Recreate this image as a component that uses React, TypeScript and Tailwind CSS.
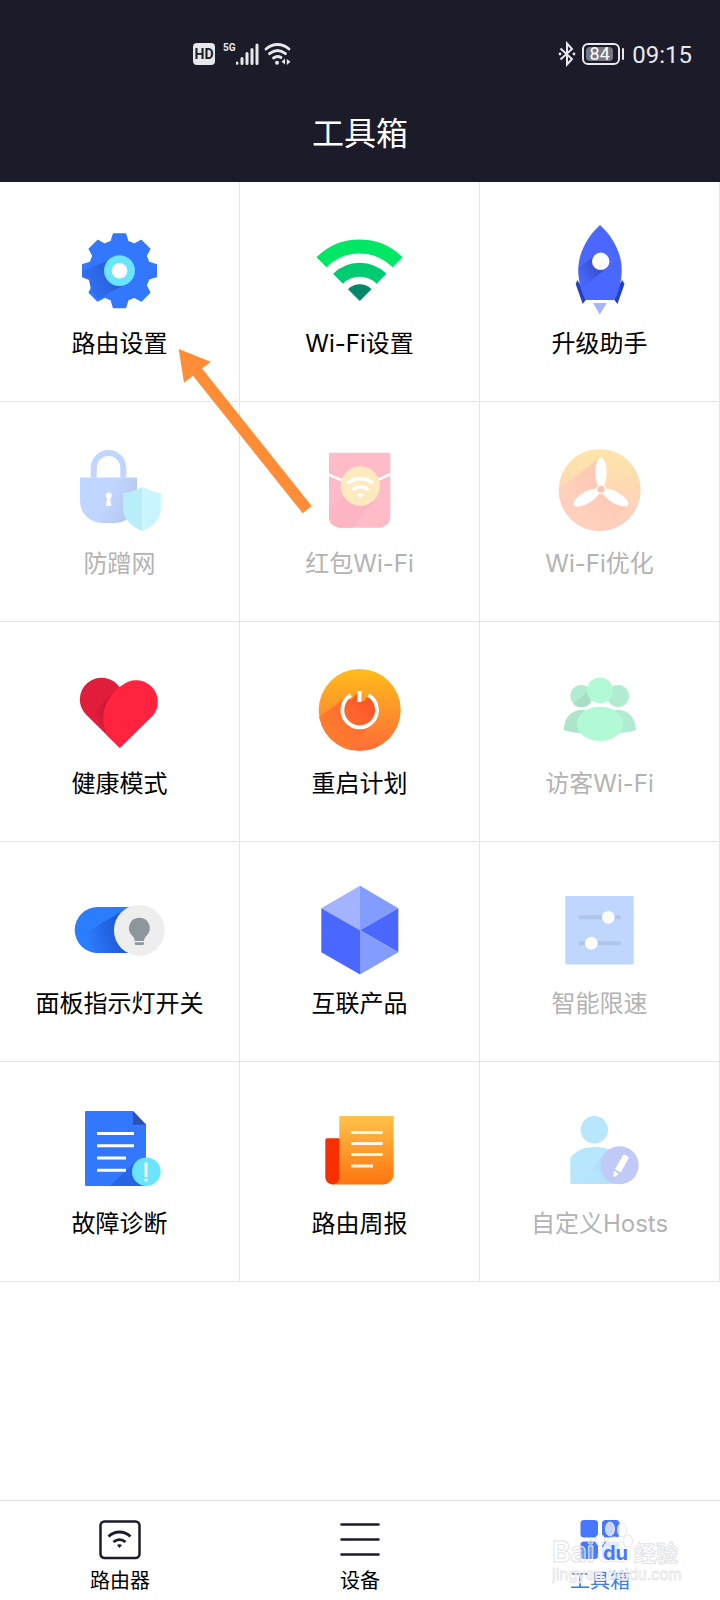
import type { ReactNode } from 'react'

type Tool = {
  id: string
  label: string
  icon: ReactNode
  disabled?: boolean
}

const GEAR_ANGLES = [0, 45, 90, 135, 180, 225, 270, 315]

// ── Tool icons ─────────────────────────────────────────
const GearIcon = () => (
  <>
    <defs>
      <linearGradient id="gear-shade" x1="38" y1="46" x2="12" y2="60" gradientUnits="userSpaceOnUse">
        <stop offset="0" stopColor="#2760d8" />
        <stop offset="1" stopColor="#3272f6" />
      </linearGradient>
    </defs>
    <g transform="translate(47.5 46.7)">
      <circle r="31" fill="#3377ff" />
      {GEAR_ANGLES.map((a) => (
        <path
          key={a}
          d="M-9 -27L-6 -36.8H6L9 -27Z"
          fill="#3377ff"
          stroke="#3377ff"
          strokeWidth="1.4"
          strokeLinejoin="round"
          transform={`rotate(${a})`}
        />
      ))}
    </g>
    <path d="M35 37L10 47V53L17 56L19 66L26 75L52 61Z" fill="url(#gear-shade)" />
    <circle cx="47.5" cy="46.7" r="15.4" fill="#6ae4ff" />
    <circle cx="47.5" cy="46.7" r="7.8" fill="#fff" />
  </>
)

const WifiIcon = () => (
  <>
    <path d="M9.5 38.2A54 54 0 0 1 85.5 38.2" fill="none" stroke="#00e765" strokeWidth="14" />
    <path d="M26 54.7A31 31 0 0 1 69.5 54.7" fill="none" stroke="#00cb70" strokeWidth="14" />
    <path d="M47.8 77L36 65.2A16.5 16.5 0 0 1 59.5 65.2Z" fill="#00876c" />
  </>
)

const RocketIcon = () => (
  <>
    <defs>
      <linearGradient id="rocket-shade" x1="46" y1="42" x2="30" y2="54" gradientUnits="userSpaceOnUse">
        <stop offset="0" stopColor="#3750cb" />
        <stop offset="1" stopColor="#4865fb" />
      </linearGradient>
    </defs>
    <path d="M25.3 56L23.7 60L30.7 80L36 73Z" fill="#2443b8" />
    <path d="M70.2 56L72.5 60L65.5 80L60 73Z" fill="#2443b8" />
    <path
      d="M48 1C60 12 69.7 28 69.7 46C69.7 58 66.5 68 62.5 76H33.5C29.5 68 26.3 58 26.3 46C26.3 28 36 12 48 1Z"
      fill="#4a67ff"
    />
    <path d="M41 33L26.5 44C26.5 52 28 58 30 63L34 61L56 43Z" fill="url(#rocket-shade)" />
    <circle cx="48.7" cy="37.3" r="8.7" fill="#fff" />
    <path d="M41 79H54.7L47.8 90.5Z" fill="#a5b3fe" />
  </>
)

const LockIcon = () => (
  <>
    <defs>
      <linearGradient id="lock-body" x1="20" y1="46" x2="60" y2="66" gradientUnits="userSpaceOnUse">
        <stop offset="0.4" stopColor="#c0d5ff" />
        <stop offset="1" stopColor="#b7c7ee" />
      </linearGradient>
    </defs>
    <path d="M21.7 33.5V23.8a14.8 14.8 0 0 1 29.6 0V33.5" fill="none" stroke="#c0d5ff" strokeWidth="6" />
    <path d="M8 33.5H65V57A22 22 0 0 1 43 79H30A22 22 0 0 1 8 57Z" fill="url(#lock-body)" />
    <circle cx="36.7" cy="51.5" r="3" fill="#fff" />
    <path d="M35.3 52H38L39.3 62H34Z" fill="#fff" />
    <path d="M70.3 42.7C65 46 58 48 51 49.3V66C52 76 61 83 70.3 87Z" fill="#b8eefa" />
    <path d="M70.3 42.7C76 46 82 48 88.8 49.3V66C88 76 80 83 70.3 87Z" fill="#c8f5ff" />
  </>
)

const PacketIcon = () => (
  <>
    <path d="M17 8.7H78.3V73A11 11 0 0 1 67.3 83.7H28A11 11 0 0 1 17 73Z" fill="#ffbbc7" />
    <path d="M31 52L17 65V73A11 11 0 0 0 28 83.7H40L64 54Z" fill="#fdb5c3" />
    <path d="M17 30.8L48 44L78.3 30.3" fill="none" stroke="#fff" strokeWidth="2.6" />
    <circle cx="48.3" cy="42" r="19.7" fill="#ffe9bf" />
    <g fill="none" stroke="#fff" strokeWidth="3.6">
      <path d="M35.5 39.5C43 33 54 33 61.2 39.5" />
      <path d="M40.5 45.8C45 42 52 42 56.2 45.8" />
    </g>
    <path d="M48.3 54.5L44.6 50.5C47 48.5 50 48.5 52 50.5Z" fill="#fff" />
  </>
)

const FanIcon = () => (
  <>
    <defs>
      <linearGradient id="fan-bg" x1="0" y1="5" x2="0" y2="87" gradientUnits="userSpaceOnUse">
        <stop offset="0" stopColor="#fee5a9" />
        <stop offset="1" stopColor="#ffccc0" />
      </linearGradient>
      <linearGradient id="fan-shade" x1="48" y1="36" x2="24" y2="60" gradientUnits="userSpaceOnUse">
        <stop offset="0" stopColor="#ffc9b4" />
        <stop offset="1" stopColor="#ffd0bc" />
      </linearGradient>
      <clipPath id="fan-clip">
        <circle cx="47.7" cy="46" r="41" />
      </clipPath>
    </defs>
    <circle cx="47.7" cy="46" r="41" fill="url(#fan-bg)" />
    <g clipPath="url(#fan-clip)">
      <path d="M47 15L0 50V90H50L76 60L48 46Z" fill="url(#fan-shade)" />
    </g>
    <g transform="translate(49 45.3)" fill="#fff">
      <ellipse cy="-16.5" rx="5.7" ry="14.8" />
      <ellipse cy="-16.5" rx="5.7" ry="14.8" transform="rotate(120)" />
      <ellipse cy="-16.5" rx="5.7" ry="14.8" transform="rotate(240)" />
      <circle r="5" />
    </g>
    <circle cx="49" cy="45.3" r="3.5" fill="#fcc3b3" />
  </>
)

const HeartIcon = () => (
  <>
    <defs>
      <linearGradient id="heart-shade" x1="40" y1="40" x2="22" y2="46" gradientUnits="userSpaceOnUse">
        <stop offset="0" stopColor="#bd1831" />
        <stop offset="1" stopColor="#de1c39" />
      </linearGradient>
    </defs>
    <path d="M48 84L15 51.5A21.7 21.7 0 1 1 48 24Z" fill="#e01d3a" />
    <path d="M42 28L20 50L36 72Z" fill="url(#heart-shade)" />
    <path
      d="M48 84L81 51.5A21.7 21.7 0 0 0 50.5 21C38.500 28.500 31.300 41 31.300 54C31.300 60 32.900 66 35.700 72Z"
      fill="#ff2340"
    />
  </>
)

const PowerIcon = () => (
  <>
    <defs>
      <linearGradient id="power-bg" x1="0" y1="5" x2="0" y2="87" gradientUnits="userSpaceOnUse">
        <stop offset="0" stopColor="#ffbd1b" />
        <stop offset="1" stopColor="#ff6c38" />
      </linearGradient>
      <linearGradient id="power-shade" x1="44" y1="40" x2="18" y2="66" gradientUnits="userSpaceOnUse">
        <stop offset="0" stopColor="#ff6a2b" />
        <stop offset="1" stopColor="#ff7b32" />
      </linearGradient>
      <linearGradient id="power-core" x1="60" y1="36" x2="36" y2="58" gradientUnits="userSpaceOnUse">
        <stop offset="0" stopColor="#ff5426" />
        <stop offset="1" stopColor="#ff6a31" />
      </linearGradient>
      <clipPath id="power-clip">
        <circle cx="47.7" cy="46" r="41" />
      </clipPath>
    </defs>
    <circle cx="47.7" cy="46" r="41" fill="url(#power-bg)" />
    <g clipPath="url(#power-clip)">
      <path d="M35 33L0 58V92H32L60 60Z" fill="url(#power-shade)" />
    </g>
    <path
      d="M45.500 29L39 36L36 34A17 17 0 1 0 57 31.500L52 37L49.500 37Z"
      fill="url(#power-core)"
    />
    <path d="M38.9 31.2A17.3 17.3 0 1 0 56.5 31.2" fill="none" stroke="#fff" strokeWidth="3.8" />
    <path d="M47.4 27V38" stroke="#fff" strokeWidth="4.2" />
  </>
)

const GuestsIcon = () => (
  <>
    <circle cx="29.3" cy="32" r="11" fill="#b1ebd1" />
    <path d="M38 25.5L21.5 39.8A11 11 0 0 0 39 38Z" fill="#a8dec5" />
    <circle cx="66" cy="32" r="11" fill="#b1ebd1" />
    <path d="M11.7 66C12 54 19 46 30 46C37 46 42 49 45 53L30 69C23 69 17 68 11.7 66Z" fill="#ade4cb" />
    <path d="M84 66C83.7 54 77 46 66 46C59 46 54 49 51 53L66 69C73 69 79 68 84 66Z" fill="#b1ebd1" />
    <circle cx="48" cy="26.4" r="13" fill="#b2f9d5" />
    <ellipse cx="48" cy="59.9" rx="23.2" ry="17.2" fill="#b2f9d5" />
  </>
)

const LampSwitchIcon = () => (
  <>
    <defs>
      <linearGradient id="switch-shade" x1="48" y1="46" x2="14" y2="54" gradientUnits="userSpaceOnUse">
        <stop offset="0" stopColor="#2058d6" />
        <stop offset="1" stopColor="#2a7dfc" />
      </linearGradient>
    </defs>
    <path d="M60 23H25.7A23 23 0 0 0 25.7 69H60Z" fill="#2a7dfc" />
    <path d="M52 26L8 52L20 68L25.7 69H56Z" fill="url(#switch-shade)" />
    <circle cx="67.3" cy="46.3" r="25.4" fill="#eee" />
    <path
      d="M67.3 33.8A10.3 10.3 0 0 0 60 51.4C62 53.5 62.7 55 62.7 57H72C72 55 72.7 53.5 74.7 51.4A10.3 10.3 0 0 0 67.3 33.8Z"
      fill="#8c969d"
    />
    <path d="M62.7 58.2H72V59.5A1.5 1.5 0 0 1 70.5 61H64.2A1.5 1.5 0 0 1 62.7 59.5Z" fill="#8c969d" />
  </>
)

const CubeIcon = () => (
  <>
    <path d="M9.3 24.3L48 1.7V46.3Z" fill="#a4b3fe" />
    <path d="M48 1.7L86.3 24.3L48 46.3Z" fill="#839cff" />
    <path d="M9.3 24.3L48 46.3V90.5L9.3 68.3Z" fill="#4a67ff" />
    <path d="M86.3 24.3V68.3L48 46.3Z" fill="#4a67ff" />
    <path d="M48 46.3L86.3 68.3L48 90.5Z" fill="#839cff" />
  </>
)

const SlidersIcon = () => (
  <>
    <rect x="13.3" y="12" width="68.4" height="68.4" rx="1" fill="#bfd7ff" />
    <path d="M26.7 33.2H68.7M26.7 59.2H68.7" stroke="#b1c5e8" strokeWidth="4" />
    <circle cx="56.3" cy="33.3" r="6.4" fill="#fcfcfa" />
    <circle cx="39.3" cy="59.2" r="6.4" fill="#fcfcfa" />
  </>
)

const DiagnoseIcon = () => (
  <>
    <path d="M14 7H61L74 20.5V82H14A1 1 0 0 1 13 81V8A1 1 0 0 1 14 7Z" fill="#3377ff" />
    <path d="M61 7L74 20.7H61Z" fill="#2c51b6" />
    <path d="M64 57L38 82H74V66Z" fill="#2765e2" />
    <path d="M25 29.5H62M25 41.8H62M25 54H54M25 66.3H54" stroke="#fff" strokeWidth="3" />
    <circle cx="74.3" cy="67.7" r="14.3" fill="#6ae4ff" />
    <path d="M74 58.5V73M74 74.8V77.5" stroke="#fff" strokeWidth="2.8" />
  </>
)

const ReportIcon = () => (
  <>
    <defs>
      <linearGradient id="report-bg" x1="0" y1="12" x2="0" y2="80" gradientUnits="userSpaceOnUse">
        <stop offset="0" stopColor="#ffc24a" />
        <stop offset="1" stopColor="#ff7510" />
      </linearGradient>
    </defs>
    <path d="M27.3 12H81.7V70A10.4 10.4 0 0 1 71.3 80.4H20L27.3 73Z" fill="url(#report-bg)" />
    <path d="M15 34.3H27.5V73.3A7.1 7.1 0 0 1 13.3 73.3V36A1.7 1.7 0 0 1 15 34.3Z" fill="#f63000" />
    <path d="M39 28.5H70.7M39 39.4H70.7M39 50.4H70.7M39 62H61" stroke="#fff5e6" strokeWidth="3" />
  </>
)

const HostsIcon = () => (
  <>
    <defs>
      <linearGradient id="hosts-shade" x1="56" y1="60" x2="40" y2="72" gradientUnits="userSpaceOnUse">
        <stop offset="0" stopColor="#aedcf7" />
        <stop offset="1" stopColor="#b6e5fd" />
      </linearGradient>
    </defs>
    <circle cx="42.3" cy="25.7" r="13.7" fill="#b7e6fd" />
    <path d="M18.3 80V54C24 46 33 43 42.3 43C51 43 57 45 62 48L68 80Z" fill="#b7e6fd" />
    <path d="M52 50L28 80H68Z" fill="url(#hosts-shade)" />
    <circle cx="67.7" cy="61.3" r="19" fill="#c0caf6" />
    <path d="M71 51.3L72.5 50.5L76.5 52.8V54.5L68.7 68.5L62.9 65.2Z" fill="#fff" />
    <path d="M62 66.8L66.8 69.8L63 73L61.3 72Z" fill="#fff" />
  </>
)

const TOOLS: Tool[] = [
  { id: 'router', label: '路由设置', icon: <GearIcon /> },
  { id: 'wifi', label: 'Wi-Fi设置', icon: <WifiIcon /> },
  { id: 'upgrade', label: '升级助手', icon: <RocketIcon /> },
  { id: 'guard', label: '防蹭网', icon: <LockIcon />, disabled: true },
  { id: 'packet', label: '红包Wi-Fi', icon: <PacketIcon />, disabled: true },
  { id: 'optimize', label: 'Wi-Fi优化', icon: <FanIcon />, disabled: true },
  { id: 'health', label: '健康模式', icon: <HeartIcon /> },
  { id: 'reboot', label: '重启计划', icon: <PowerIcon /> },
  { id: 'guest', label: '访客Wi-Fi', icon: <GuestsIcon />, disabled: true },
  { id: 'lamp', label: '面板指示灯开关', icon: <LampSwitchIcon /> },
  { id: 'linked', label: '互联产品', icon: <CubeIcon /> },
  { id: 'limit', label: '智能限速', icon: <SlidersIcon />, disabled: true },
  { id: 'diagnose', label: '故障诊断', icon: <DiagnoseIcon /> },
  { id: 'report', label: '路由周报', icon: <ReportIcon /> },
  { id: 'hosts', label: '自定义Hosts', icon: <HostsIcon />, disabled: true },
]

// ── Bottom tabs ────────────────────────────────────────
const TABS = [
  {
    id: 'router',
    label: '路由器',
    icon: (
      <>
        <rect x="1.5" y="2.500" width="39" height="36.500" rx="4" fill="none" stroke="#1b1b29" strokeWidth="2.5" />
        <g fill="none" stroke="#1b1b29" strokeWidth="2.8">
          <path d="M9.5 17.5C16 11.5 25 11.5 31.5 17.5" />
          <path d="M14.5 23C18 19.8 23 19.8 26.5 23" />
        </g>
        <path d="M18 26C19.5 25 21.5 25 23 26L20.5 29Z" fill="#1b1b29" />
      </>
    ),
  },
  {
    id: 'devices',
    label: '设备',
    icon: (
      <path
        d="M2.5 5.500H39.5M2.5 20.5H39.5M2.5 35.5H39.5"
        stroke="#1b1b29"
        strokeWidth="2.5"
        strokeLinecap="round"
      />
    ),
  },
  {
    id: 'tools',
    label: '工具箱',
    active: true,
    icon: (
      <g fill="#4677fc">
        <rect x="1.5" y="1" width="17.5" height="17.5" rx="3.5" />
        <rect x="23" y="1" width="17.5" height="17.5" rx="3.5" />
        <rect x="1.5" y="22.5" width="17.5" height="17.5" rx="3.5" />
        <rect x="23" y="22.5" width="17.5" height="17.5" rx="3.5" />
      </g>
    ),
  },
]

function StatusBar() {
  return (
    <div className="flex h-[107px] items-center justify-between pl-[193px] pr-7 text-[#e8e8ec]">
      <div className="flex items-center">
        <span className="flex h-[22px] w-[22px] items-center justify-center rounded bg-[#e8e8ec] font-['Roboto',sans-serif] text-sm font-bold text-[#1b1b29]">
          HD
        </span>
        <span className="ml-2 h-[22px] font-['Roboto',sans-serif] text-[10px] font-bold leading-[10px]">5G</span>
        <svg className="h-[22px] w-6" viewBox="0 0 24 22" stroke="currentColor" strokeWidth="3" strokeLinecap="round">
          <path d="M1 20V20.2M6 15.5V20.5M11 10.5V20.5M16 6.5V20.5M21 2V20.5" />
        </svg>
        <svg
          className="ml-1 h-[22px] w-7"
          viewBox="0 0 28 22"
          fill="none"
          stroke="currentColor"
          strokeWidth="2.8"
          strokeLinecap="round"
        >
          <path d="M2 6C9 0 18 0 25 6" />
          <path d="M5.5 10.7C10.5 6.7 16.5 6.7 21.5 10.7" />
          <path d="M9.5 15C12 13.3 15 13.3 17 14.5" />
          <circle cx="13" cy="19.7" r="2" fill="currentColor" stroke="none" />
          <path d="M21 15.5V21.5L17.5 18.8ZM22.8 22V16L26.5 18.8Z" fill="currentColor" stroke="none" />
        </svg>
      </div>
      <div className="flex items-center">
        <svg className="h-[26px] w-[18px]" viewBox="0 0 18 26" fill="none" stroke="currentColor" strokeWidth="2">
          <path d="M2.5 7.5L14 18L9 23.5V2.5L14 8L2.5 18.5" />
          <circle cx="2" cy="13" r="1.4" fill="currentColor" stroke="none" />
          <circle cx="16" cy="13" r="1.4" fill="currentColor" stroke="none" />
        </svg>
        <span className="ml-1.5 flex h-[22px] w-[38px] items-center rounded-md border-2 border-current p-0.5">
          <span className="flex h-[14px] w-[27px] items-center justify-center rounded-sm bg-[#777781] font-['Roboto',sans-serif] text-lg text-white">
            84
          </span>
        </span>
        <span className="ml-0.5 h-3 w-0.5 rounded bg-current" />
        <time className="ml-2 pt-0.5 font-['Roboto',sans-serif] text-2xl">09:15</time>
      </div>
    </div>
  )
}

function ToolTile({ tool }: { tool: Tool }) {
  return (
    <button
      type="button"
      disabled={tool.disabled}
      className={`flex h-[220px] flex-col items-center border-b border-r border-[#e4e5e8] pt-[42px] text-2xl leading-[34px] ${
        tool.disabled ? 'text-[#b3b3b3]' : 'text-black'
      }`}
    >
      <svg className="h-[95px] w-[95px]" viewBox="0 0 95 95" aria-hidden="true">
        {tool.icon}
      </svg>
      <span className="mt-2">{tool.label}</span>
    </button>
  )
}

function Watermark() {
  return (
    <svg
      className="pointer-events-none absolute bottom-3 right-9 h-[70px] w-[132px]"
      viewBox="0 0 132 70"
      aria-hidden="true"
    >
      <g fill="#fff" fillOpacity="0.7" stroke="#e6e6e9" strokeWidth="1">
        <ellipse cx="58" cy="11" rx="4.500" ry="7" />
        <ellipse cx="70" cy="12" rx="4.500" ry="7" />
        <ellipse cx="48" cy="22" rx="4.500" ry="6" />
        <ellipse cx="76" cy="23" rx="4.500" ry="6" />
        <path
          d="M62 19C69 19 70 27 75 31C82 38 77 45 70 44C64 43 60 43 55 44C47 45 43 37 49 31C54 27 55 19 62 19Z"
          fillOpacity="0.85"
        />
      </g>
      <g fontFamily="Inter, 'Noto Sans CJK SC', sans-serif" fontWeight="700" stroke="#e3e3e6" strokeWidth="1">
        <text x="0" y="44" fontSize="28" fill="#fff" fillOpacity="0.3">
          Bai
        </text>
        <text x="51" y="42" fontSize="20" fill="#4677fc" stroke="none">
          du
        </text>
        <text x="82" y="43" fontSize="22" fill="#fff" fillOpacity="0.4">
          经验
        </text>
      </g>
      <text
        x="0"
        y="62"
        fontSize="15"
        fontFamily="Inter, sans-serif"
        fill="#fff"
        fillOpacity="0.6"
        stroke="#e6e6e9"
        strokeWidth="0.8"
      >
        jingyan.baidu.com
      </text>
    </svg>
  )
}

export default function App() {
  return (
    <div className="flex min-h-screen flex-col bg-white font-['Inter','Noto_Sans_CJK_SC',sans-serif]">
      {/* Header */}
      <header className="bg-[#1b1b29] pb-[21px]">
        <StatusBar />
        <h1 className="text-center text-[32px] leading-[54px] text-white">工具箱</h1>
      </header>

      {/* Tool grid */}
      <main className="relative flex-1">
        <div className="grid grid-cols-3">
          {TOOLS.map((tool) => (
            <ToolTile key={tool.id} tool={tool} />
          ))}
        </div>
        <svg
          className="pointer-events-none absolute left-[178px] top-[166px] h-[166px] w-[134px]"
          viewBox="0 0 134 166"
          aria-hidden="true"
        >
          <path d="M0.7 1L32.7 13.7L24 20.5L133.7 158L124.7 165.3L15 27.7L6 34.7Z" fill="#ff8c37" />
        </svg>
      </main>

      {/* Bottom tabs */}
      <nav className="relative grid grid-cols-3 border-t border-[#dfe0e2]">
        {TABS.map((tab) => (
          <a
            key={tab.id}
            href={`#${tab.id}`}
            className={`flex flex-col items-center pb-1 pt-[18px] text-xl leading-[30px] ${
              tab.active ? 'text-[#3c7cea]' : 'text-black'
            }`}
          >
            <svg className="h-[41px] w-[42px]" viewBox="0 0 42 41" aria-hidden="true">
              {tab.icon}
            </svg>
            <span className="mt-1.5">{tab.label}</span>
          </a>
        ))}
        <Watermark />
      </nav>
    </div>
  )
}
